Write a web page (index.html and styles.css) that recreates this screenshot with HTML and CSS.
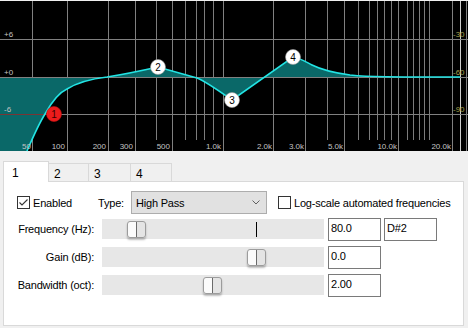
FILE: index.html
```html
<!DOCTYPE html>
<html lang="en">
<head>
    <meta charset="UTF-8">
    <meta name="viewport" content="width=device-width, initial-scale=1.0">
    <title>Equalizer</title>
    <link rel="stylesheet" href="styles.css">
</head>
<body>

    <div class="graph">
        <svg width="468" height="152" viewBox="0 0 468 152">
            <rect x="0" y="1" width="468" height="150" fill="#000"/>

            <!-- minor frequency lines -->
            <g stroke="#7c7c7c" stroke-width="1">
                <line x1="156.5" y1="1" x2="156.5" y2="140"/>
                <line x1="185.5" y1="1" x2="185.5" y2="140"/>
                <line x1="196.5" y1="1" x2="196.5" y2="140"/>
                <line x1="204.5" y1="1" x2="204.5" y2="140"/>
                <line x1="213.5" y1="1" x2="213.5" y2="140"/>
                <line x1="327.5" y1="1" x2="327.5" y2="140"/>
                <line x1="358.5" y1="1" x2="358.5" y2="140"/>
                <line x1="369.5" y1="1" x2="369.5" y2="140"/>
                <line x1="377.5" y1="1" x2="377.5" y2="140"/>
                <line x1="384.5" y1="1" x2="384.5" y2="140"/>
                <line x1="391.5" y1="1" x2="391.5" y2="140"/>
                <line x1="407.5" y1="1" x2="407.5" y2="140"/>
                <line x1="413.5" y1="1" x2="413.5" y2="140"/>
                <line x1="419.5" y1="1" x2="419.5" y2="140"/>
                <line x1="424.5" y1="1" x2="424.5" y2="140"/>
                <line x1="429.5" y1="1" x2="429.5" y2="140"/>
            </g>
            <!-- labelled frequency lines -->
            <g stroke="#808080" stroke-width="1">
                <line x1="32.5" y1="1" x2="32.5" y2="151"/>
                <line x1="67.5" y1="1" x2="67.5" y2="151"/>
                <line x1="108.5" y1="1" x2="108.5" y2="151"/>
                <line x1="135.5" y1="1" x2="135.5" y2="151"/>
                <line x1="172.5" y1="1" x2="172.5" y2="151"/>
                <line x1="223.5" y1="1" x2="223.5" y2="151"/>
                <line x1="273.5" y1="1" x2="273.5" y2="151"/>
                <line x1="305.5" y1="1" x2="305.5" y2="151"/>
                <line x1="344.5" y1="1" x2="344.5" y2="151"/>
                <line x1="398.5" y1="1" x2="398.5" y2="151"/>
                <line x1="452.5" y1="1" x2="452.5" y2="151"/>
                <line x1="466.5" y1="1" x2="466.5" y2="151"/>
            </g>
            <line x1="460.5" y1="1" x2="460.5" y2="151" stroke="#cfcfcf"/>

            <!-- gain lines -->
            <g stroke="#808080" stroke-width="1">
                <line x1="0" y1="39.5" x2="468" y2="39.5"/>
                <line x1="0" y1="114.5" x2="468" y2="114.5"/>
            </g>

            <path class="fill" d="M0,77 L0,151 L27,151 C33,137 40,122 45,114 C50,105 58,93 67,89 C75,84 90,79 107,77 C120,75 140,71 158,67 L197,78 C205,81 215,88 232,100 L293,57 C300,58 306,62 312,65 C320,69 335,73 350,75 C370,77 390,77 460,77 Z"/>
            <line x1="0" y1="77.5" x2="468" y2="77.5" stroke="#808080"/>
            <line x1="0" y1="114.5" x2="50" y2="114.5" stroke="#7a3434"/>
            <path class="curve" d="M27,151 C33,137 40,122 45,114 C50,105 58,93 67,89 C75,84 90,79 107,77 C120,75 140,71 158,67 L197,78 C205,81 215,88 232,100 L293,57 C300,58 306,62 312,65 C320,69 335,73 350,75 C370,77 390,77 460,77"/>

            <g class="db-labels">
                <text x="4" y="37">+6</text>
                <text x="4" y="75">+0</text>
                <text x="4" y="112">-6</text>
            </g>
            <g class="meter-labels">
                <text x="453" y="37">-30</text>
                <text x="453" y="75">-60</text>
                <text x="453" y="112">-90</text>
            </g>
            <g class="freq-labels">
                <text x="31" y="149">50</text>
                <text x="65" y="149">100</text>
                <text x="106" y="149">200</text>
                <text x="133" y="149">300</text>
                <text x="170" y="149">500</text>
                <text x="221" y="149">1.0k</text>
                <text x="272" y="149">2.0k</text>
                <text x="304" y="149">3.0k</text>
                <text x="343" y="149">5.0k</text>
                <text x="397" y="149">10.0k</text>
                <text x="451" y="149">20.0k</text>
            </g>

            <g class="node red">
                <circle cx="54" cy="114" r="7.5"/>
                <text x="54" y="118">1</text>
            </g>
            <g class="node">
                <circle cx="158" cy="67" r="7.5"/>
                <text x="158" y="71">2</text>
            </g>
            <g class="node">
                <circle cx="232" cy="100" r="7.5"/>
                <text x="232" y="104">3</text>
            </g>
            <g class="node">
                <circle cx="293" cy="57" r="7.5"/>
                <text x="293" y="61">4</text>
            </g>
        </svg>
    </div>

    <div class="controls">
        <div class="tabs">
            <div class="tab active">1</div>
            <div class="tab t2">2</div>
            <div class="tab t3">3</div>
            <div class="tab t4">4</div>
        </div>

        <div class="panel">
            <div class="top-row">
                <label class="check enabled">
                    <span class="box">
                        <svg width="11" height="11" viewBox="0 0 11 11"><polyline points="1.5,5.5 4,8 9.5,2.5" fill="none" stroke="#333" stroke-width="1.1"/></svg>
                    </span>
                    Enabled
                </label>
                <span class="type-label">Type:</span>
                <div class="select">
                    <span>High Pass</span>
                    <svg width="8" height="5" viewBox="0 0 8 5"><polyline points="0.5,0.5 4,4 7.5,0.5" fill="none" stroke="#606060" stroke-width="1"/></svg>
                </div>
                <label class="check">
                    <span class="box"></span>
                    Log-scale automated frequencies
                </label>
            </div>

            <div class="row">
                <span class="label">Frequency (Hz):</span>
                <div class="track">
                    <div class="mark"></div>
                    <div class="thumb" style="left: 25px"></div>
                </div>
                <div class="field">80.0</div>
                <div class="field">D#2</div>
            </div>

            <div class="row">
                <span class="label">Gain (dB):</span>
                <div class="track">
                    <div class="thumb" style="left: 145px"></div>
                </div>
                <div class="field">0.0</div>
            </div>

            <div class="row">
                <span class="label">Bandwidth (oct):</span>
                <div class="track">
                    <div class="thumb" style="left: 101px"></div>
                </div>
                <div class="field">2.00</div>
            </div>
        </div>
    </div>

</body>
</html>
```

FILE: styles.css
```css
body {
    margin: 0;
    background: #f0f0f0;
    font-family: 'Liberation Sans', Arial, sans-serif;
    font-size: 11px;
    letter-spacing: -0.2px;
    color: #000;
    overflow: hidden;
}

/* graph */

.graph svg {
    display: block;
}

.fill {
    fill: #0a6868;
}

.curve {
    fill: none;
    stroke: #22e4e4;
    stroke-width: 1.6;
}

.graph text {
    font-family: 'Liberation Sans', Arial, sans-serif;
    font-size: 8px;
    letter-spacing: 0;
}

.db-labels text,
.freq-labels text {
    fill: #c4c4c4;
}

.freq-labels text {
    text-anchor: end;
}

.meter-labels text {
    fill: #a6a650;
}

.node circle {
    fill: #fff;
    stroke: #9a9a9a;
    stroke-width: 0.6;
}

.node text {
    fill: #000;
    font-size: 10px;
    text-anchor: middle;
}

.node.red circle {
    fill: #ec1c1c;
    stroke: #c01010;
}

.node.red text {
    fill: #3a0000;
}

/* tabs */

.tabs {
    display: flex;
    align-items: flex-end;
    height: 20px;
    margin-top: 9px;
    padding-left: 3px;
    position: relative;
    z-index: 1;
}

.tab {
    box-sizing: border-box;
    height: 18px;
    padding: 3px 0 0 5px;
    border-top: 1px solid #d9d9d9;
    border-right: 1px solid #d9d9d9;
    background: #f0f0f0;
    font-size: 12px;
}

.tab.active {
    width: 46px;
    height: 21px;
    margin-bottom: -1px;
    padding: 4px 0 0 8px;
    border-left: 1px solid #d9d9d9;
    background: #fff;
}

.tab.t2 { width: 40px; }
.tab.t3 { width: 42px; }
.tab.t4 { width: 41px; }

/* panel */

.panel {
    box-sizing: border-box;
    width: 461px;
    height: 145px;
    margin-left: 3px;
    padding: 9px 0 0 13px;
    background: #fff;
    border: 1px solid #d9d9d9;
}

.top-row {
    display: flex;
    align-items: center;
    height: 23px;
    margin-bottom: 4px;
}

.check {
    display: flex;
    align-items: center;
    gap: 3px;
}

.check.enabled {
    width: 81px;
}

.box {
    box-sizing: border-box;
    width: 13px;
    height: 13px;
    border: 1px solid #333;
    background: #fff;
    display: flex;
}

.type-label {
    width: 33px;
}

.select {
    box-sizing: border-box;
    width: 136px;
    height: 23px;
    margin-right: 11px;
    padding: 0 6px 0 4px;
    background: #e1e1e1;
    border: 1px solid #adadad;
    display: flex;
    align-items: center;
    justify-content: space-between;
}

.row {
    display: flex;
    align-items: flex-start;
    height: 23px;
    margin-bottom: 5px;
}

.label {
    width: 77px;
    margin-right: 8px;
    text-align: right;
    line-height: 23px;
    white-space: nowrap;
}

.track {
    position: relative;
    width: 222px;
    height: 20px;
    margin: 1px 4px 0 0;
    background: #e7e7e7;
}

.mark {
    position: absolute;
    left: 154px;
    top: 3px;
    width: 1px;
    height: 15px;
    background: #000;
}

.thumb {
    position: absolute;
    top: 2px;
    box-sizing: border-box;
    width: 19px;
    height: 17px;
    border: 1px solid #9c9c9c;
    border-radius: 3px;
    background: linear-gradient(to right, #fbfbfb 50%, #e4e4e4 50%);
    box-shadow: 0 2px 2px rgba(0, 0, 0, 0.25);
}

.thumb::after {
    content: '';
    position: absolute;
    left: 8px;
    top: 0;
    width: 1px;
    height: 100%;
    background: #6a6a6a;
}

.field {
    box-sizing: border-box;
    width: 53px;
    height: 23px;
    margin-right: 3px;
    padding: 3px 0 0 2px;
    border: 1px solid #7a7a7a;
    background: #fff;
}
```
